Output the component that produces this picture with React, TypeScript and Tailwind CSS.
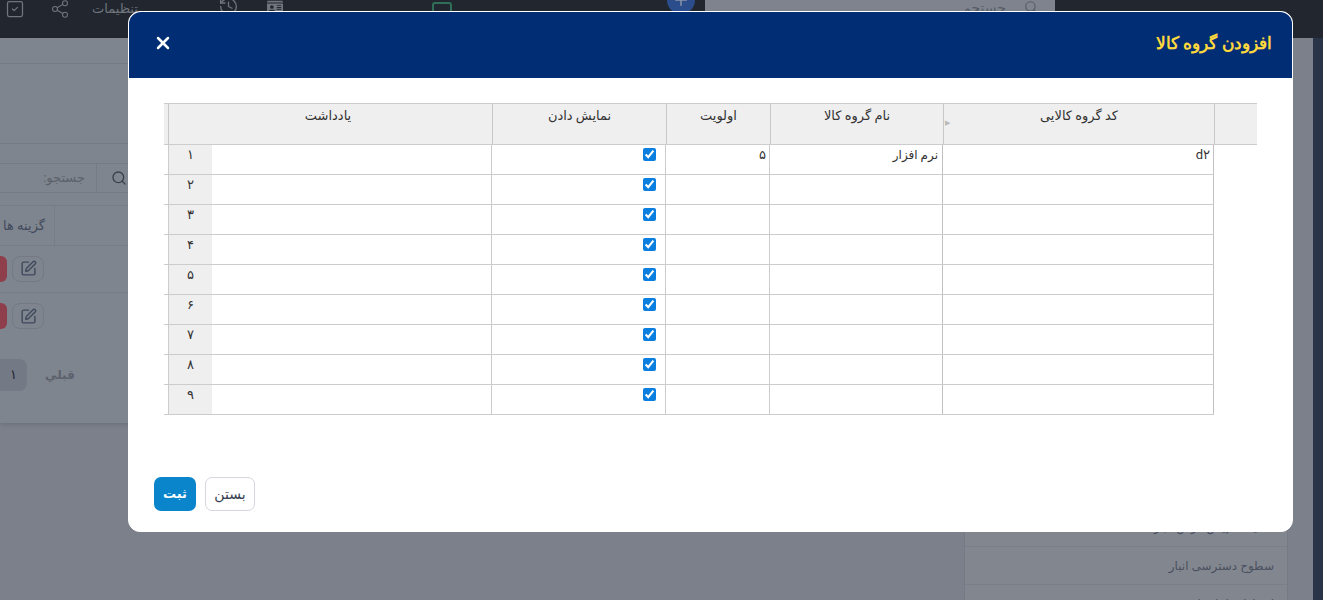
import React from "react";
import { X, Search, SquarePen, Share2, History, SquareCheck, Plus } from "lucide-react";
import { FaIdCard } from "react-icons/fa";

const digits = ["۱", "۲", "۳", "۴", "۵", "۶", "۷", "۸", "۹"];
const font = { fontFamily: 'Roboto, "DejaVu Sans", sans-serif' };

function Row({ i }: { i: number }) {
  const cell = "h-full border-r border-[#cccccc] shrink-0";
  const text = "pr-[3px] text-[13px] leading-[20px] text-[#333333]";
  return (
    <div className="flex h-[30px] border-b border-[#cccccc]">
      <div className={`${cell} w-[5px]`} />
      <div className="w-[43px] shrink-0 bg-[#efefef] text-center text-[13px] leading-[20px] text-[#333333]">{digits[i]}</div>
      <div className={`${cell} w-[280px]`} />
      <div className={`${cell} flex w-[174px] justify-end pr-[9px] pt-[3px]`}>
        <input type="checkbox" defaultChecked className="m-0 h-[13px] w-[13px] accent-[#0a7fe0]" />
      </div>
      <div dir="rtl" className={`${cell} ${text} w-[104px]`}>{i === 0 ? "۵" : ""}</div>
      <div dir="rtl" className="h-full w-[173px] shrink-0 border-r border-[#c0c0c0] pr-[4px] text-[12px] leading-[20px] text-[#333333]">{i === 0 ? "نرم افزار" : ""}</div>
      <div dir="rtl" className={`${text} h-full w-[271px] shrink-0 border-r border-[#c0c0c0]`}>{i === 0 ? "d۲" : ""}</div>
    </div>
  );
}

function Head({ w, label, children }: { w: string; label?: string; children?: React.ReactNode }) {
  return (
    <div className={`${w} relative shrink-0 border-r border-[#c8c8c8] pt-[1px] text-center text-[13px] leading-[22px] text-[#333333]`}>
      {label}
      {children}
    </div>
  );
}

function ActionRow({ line }: { line?: boolean }) {
  return (
    <div className={`flex h-[47px] shrink-0 items-center gap-[5px] pb-[1px] ${line ? "border-b border-[#777c86]" : ""}`}>
      <div className="h-[26px] w-[7px] rounded-r-[6px] bg-[#8f3e4c]" />
      <div className="flex h-[26px] w-[32px] items-center justify-center rounded-[8px] border border-[#737985] text-[#3f4a5c]">
        <SquarePen size={17} />
      </div>
    </div>
  );
}

export default function App() {
  return (
    <div dir="ltr" style={font} className="relative flex h-[600px] w-[1323px] flex-col overflow-hidden bg-[#7b808a]">
      {/* top bar */}
      <div className="flex h-[38px] shrink-0 items-start bg-[#22272f] text-[#6f747d]">
        <SquareCheck size={20} strokeWidth={1.5} className="ml-[5px] mt-[-1px]" />
        <Share2 size={20} strokeWidth={1.25} className="ml-[25px] mt-[-1px]" />
        <span className="ml-[22px] w-[44px] whitespace-nowrap text-[13px] leading-[17px]">تنظیمات</span>
        <History size={21} strokeWidth={1.5} className="ml-[82px] mt-[-4px]" />
        <FaIdCard size={16} className="ml-[28px] mt-[-1px]" />
        <div className="ml-[149px] mt-[2px] flex h-[20px] w-[20px] items-center justify-center rounded-[3px] border-2 border-[#2f6f58]">
          <div className="h-[3px] w-[3px] rounded-full bg-[#2f6f58]" />
        </div>
        <div className="ml-[215px] mt-[-14px] flex h-[28px] w-[28px] items-center justify-center rounded-full bg-[#2c4d8c]">
          <Plus size={18} className="text-[#8a94a8]" />
        </div>
        <div className="ml-[10px] flex h-[38px] w-[350px] items-start justify-end bg-[#7e838d] pr-[17px] text-[#565b65]">
          <span className="text-[14px] leading-[16px]">جستجو...</span>
          <Search size={14} className="ml-[7px]" />
        </div>
      </div>

      {/* page behind the overlay */}
      <div className="flex min-h-0 flex-1">
        <div className="flex h-[385px] w-[960px] shrink-0 flex-col bg-[#7f858e] shadow-[0_2px_4px_rgba(0,0,0,0.12)]">
          <div className="h-[26px] shrink-0 border-b border-[#757a84]" />
          <div className="h-[80px] shrink-0 border-b border-[#757a84]" />
          <div className="mt-[19px] flex h-[30px] shrink-0 items-center border-y border-[#757a84]">
            <span dir="rtl" className="w-[96px] shrink-0 pr-[11px] text-[13px] text-[#5c616b]">جستجو:</span>
            <div className="h-full border-r border-[#757a84]" />
            <Search size={16} strokeWidth={2} className="ml-[14px] text-[#3b4048]" />
          </div>
          <div className="mt-[12px] flex h-[41px] shrink-0 items-stretch border-y border-[#777c86]">
            <span className="flex w-[55px] shrink-0 items-center justify-end whitespace-nowrap border-r border-[#777c86] pr-[9px] text-[13px] text-[#3f4a5c]">گزینه ها</span>
          </div>
          <ActionRow line />
          <ActionRow />
          <div className="mt-[19px] flex items-center">
            <div className="flex h-[32px] w-[27px] items-center justify-center rounded-r-[8px] bg-[#737985] text-[13px] text-[#22272f]">۱</div>
            <span className="ml-[18px] text-[12px] font-bold text-[#5c616b]">قبلي</span>
          </div>
        </div>

        <div className="ml-[4px] mt-[470px] flex w-[324px] shrink-0 flex-col self-start border-x border-[#757a84] bg-[#82878f] text-[#4b5060]">
          <div dir="rtl" className="h-[39px] border-b border-[#797e88] pr-[13px] text-[12px] leading-[38px]">تنظیمات پیش فرض انبار</div>
          <div dir="rtl" className="h-[38px] border-b border-[#797e88] pr-[13px] text-[12px] leading-[38px]">سطوح دسترسی انبار</div>
          <div dir="rtl" className="h-[38px] pr-[13px] text-[12px] leading-[38px]">اختیارات انبار دار</div>
        </div>
        <div className="ml-[25px] h-full w-[10px] shrink-0 bg-[#2a3449]" />
      </div>

      {/* modal */}
      <div className="absolute left-[128px] top-[11px] flex h-[521px] w-[1165px] flex-col rounded-[12px] border border-white bg-white">
        <div className="flex h-[66px] shrink-0 items-center justify-between rounded-t-[12px] bg-[#002d74] pb-[4px] pl-[24px] pr-[20px]">
          <X size={20} strokeWidth={3} className="text-white" />
          <span className="font-['Liberation_Sans'] text-[16.5px] font-bold text-[#ffd83d]">افزودن گروه کالا</span>
        </div>
        <div className="ml-[35px] mt-[25px] w-[1093px]">
          <div className="flex h-[42px] border-y border-[#cccccc] bg-[#efefef]">
            <Head w="w-[5px]" />
            <Head w="w-[324px]">
              <span className="pr-[5px]">یادداشت</span>
            </Head>
            <Head w="w-[174px]" label="نمایش دادن" />
            <Head w="w-[104px]" label="اولویت" />
            <Head w="w-[173px]" label="نام گروه کالا" />
            <Head w="w-[271px]" label="کد گروه کالایی">
              <span className="absolute left-[1px] top-[12px] text-[7px] leading-[14px] text-[#b8b8b8]">▶</span>
            </Head>
            <div className="w-[42px] shrink-0" />
          </div>
          <div className="w-[1050px]">
            {digits.map((_, i) => (
              <Row key={i} i={i} />
            ))}
          </div>
        </div>
        <div className="ml-[25px] mt-[62px] flex gap-[9px]">
          <button className="h-[34px] w-[42px] rounded-[7px] bg-[#0a85cb] text-[13px] font-bold text-white">ثبت</button>
          <button className="h-[34px] w-[50px] rounded-[7px] border border-[#d5d7de] bg-white text-[14px] text-[#374151]">بستن</button>
        </div>
      </div>
    </div>
  );
}
